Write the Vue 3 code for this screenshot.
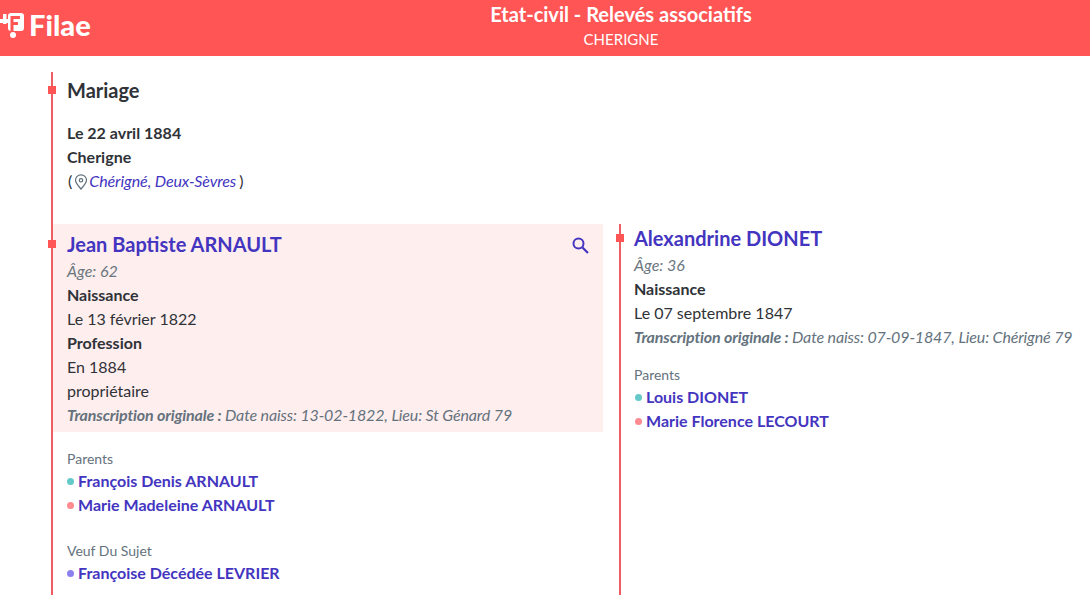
<template>
  <div class="page">
    <header class="topbar">
      <div class="logo">
        <svg class="mark" width="26" height="40" viewBox="0 0 26 40" aria-hidden="true">
          <rect x="-2" y="13" width="10" height="4" fill="#fff" />
          <rect x="3" y="8" width="3.500" height="10" fill="#fff" />
          <rect x="8" y="7" width="16" height="18" rx="3" fill="#fff" />
          <path d="M12 25V11.500h8M12 17.500h6" fill="none" stroke="#ff5555" stroke-width="3" />
          <circle cx="13" cy="29" r="3" fill="#fff" />
        </svg>
        <span class="logo-text">Filae</span>
      </div>
      <div class="heading">
        <div class="title">Etat-civil - Relevés associatifs</div>
        <div class="subtitle">CHERIGNE</div>
      </div>
    </header>

    <main class="content">
      <section class="event rail">
        <span class="dot"></span>
        <h2 class="event-title">Mariage</h2>
        <div class="lines">
          <div class="strong">Le 22 avril 1884</div>
          <div class="strong">Cherigne</div>
          <div class="place">
            <span class="paren">(</span>
            <svg class="pin" width="14" height="16" viewBox="0 0 14 16" aria-hidden="true">
              <path d="M7 15C4 11.6 1.5 9 1.5 6.3a5.5 5.5 0 0 1 11 0C12.500 9 10 11.600 7 15z" fill="none" stroke="#5f6f7a" stroke-width="1.200" />
              <circle cx="7" cy="6.300" r="1.700" fill="none" stroke="#5f6f7a" stroke-width="1.200" />
            </svg>
            <a class="place-link">Chérigné, Deux-Sèvres</a>
            <span class="paren">)</span>
          </div>
        </div>
      </section>

      <div class="people">
        <section class="person rail first">
          <div class="card">
            <span class="dot"></span>
            <h3 class="name">Jean Baptiste ARNAULT</h3>
            <svg class="search" width="20" height="20" viewBox="0 0 20 20" aria-hidden="true">
              <circle cx="7.500" cy="7.500" r="5" fill="none" stroke="#4335c0" stroke-width="2" />
              <path d="M11.500 11.500 17 17" stroke="#4335c0" stroke-width="2.200" />
            </svg>
            <div class="age">Âge: 62</div>
            <div class="strong">Naissance</div>
            <div>Le 13 février 1822</div>
            <div class="strong">Profession</div>
            <div>En 1884</div>
            <div>propriétaire</div>
            <div class="note"><b>Transcription originale :</b> Date naiss: 13-02-1822, Lieu: St Génard 79</div>
          </div>
          <div class="relations">
            <div class="rel-label">Parents</div>
            <div class="rel"><i class="bullet teal"></i>François Denis ARNAULT</div>
            <div class="rel"><i class="bullet pink"></i>Marie Madeleine ARNAULT</div>
          </div>
          <div class="relations">
            <div class="rel-label">Veuf Du Sujet</div>
            <div class="rel"><i class="bullet violet"></i>Françoise Décédée LEVRIER</div>
          </div>
        </section>

        <section class="person rail second">
          <span class="dot second-dot"></span>
          <h3 class="name">Alexandrine DIONET</h3>
          <div class="age">Âge: 36</div>
          <div class="strong">Naissance</div>
          <div>Le 07 septembre 1847</div>
          <div class="note"><b>Transcription originale :</b> Date naiss: 07-09-1847, Lieu: Chérigné 79</div>
          <div class="relations">
            <div class="rel-label">Parents</div>
            <div class="rel"><i class="bullet teal"></i>Louis DIONET</div>
            <div class="rel"><i class="bullet pink"></i>Marie Florence LECOURT</div>
          </div>
        </section>
      </div>
    </main>
  </div>
</template>

<script setup>
</script>

<style>
html, body { margin: 0; background: #fff; overflow: hidden; }
</style>

<style scoped>
.page {
  width: 1090px;
  height: 595px;
  overflow: hidden;
  font: 16px/24px Lato, sans-serif;
  color: #2f3338;
}
.topbar {
  height: 56px;
  background: #ff5555;
  color: #fff;
  display: flex;
}
.logo {
  width: 152px;
  display: flex;
  align-items: flex-start;
  overflow: hidden;
}
.mark { margin-top: 6px; flex: none; }
.logo-text {
  font: 900 29px/50px Lato, sans-serif;
  margin-left: 3px;
}
.heading { flex: 1; text-align: center; }
.title { font-size: 20px; font-weight: 700; line-height: 24px; margin-top: 2px; }
.subtitle { font-size: 15px; line-height: 20px; margin-top: 3px; }

.content { margin: 16px 0 0 51px; }
.rail { border-left: 2px solid #ee5f63; position: relative; }
.dot {
  position: absolute;
  left: -5px;
  width: 8px;
  height: 8px;
  background: #ff5555;
}
.event { padding: 0 0 31px 14px; }
.event > .dot { top: 14px; }
.event-title { margin: 0; font-size: 20px; font-weight: 700; line-height: 36px; }
.lines { margin-top: 13px; }
.strong { font-weight: 700; }
.place { display: flex; align-items: center; }
.paren { padding-left: 1px; }
.pin { margin: 1px 1px 0 2px; }
.place-link { color: #4335c0; font-style: italic; margin-right: 2px; letter-spacing: -0.1px; }

.people { display: flex; min-height: 372px; }
.person { flex: none; }
.first { width: 550px; }
.card { background: #ffeeee; padding: 5px 14px; position: relative; height: 198px; }
.card > .dot { top: 16px; }
.search { position: absolute; top: 12px; right: 12px; }
.second { margin-left: 16px; padding-left: 13px; width: 455px; }
.second-dot { top: 10px; }
.name { margin: 0; font-size: 20px; font-weight: 700; line-height: 30px; color: #4335c0; }
.second .name { line-height: 29px; }
.age { font-style: italic; color: #6b7780; }
.note { font-style: italic; color: #64727d; white-space: nowrap; letter-spacing: -0.15px; }
.relations { margin-top: 16px; }
.first .relations { padding-left: 14px; }
.card + .relations { margin-top: 17px; }
.first .relations + .relations { margin-top: 24px; }
.rel-label { font-size: 14px; line-height: 20px; color: #64727d; }
.rel { font-weight: 700; color: #4335c0; display: flex; align-items: center; }
.bullet { width: 7px; height: 7px; border-radius: 50%; margin-right: 4px; flex: none; }
.second .bullet { margin-left: 1px; }
.teal { background: #63c9c9; }
.pink { background: #ff8a8f; }
.violet { background: #8a80ee; }
</style>
